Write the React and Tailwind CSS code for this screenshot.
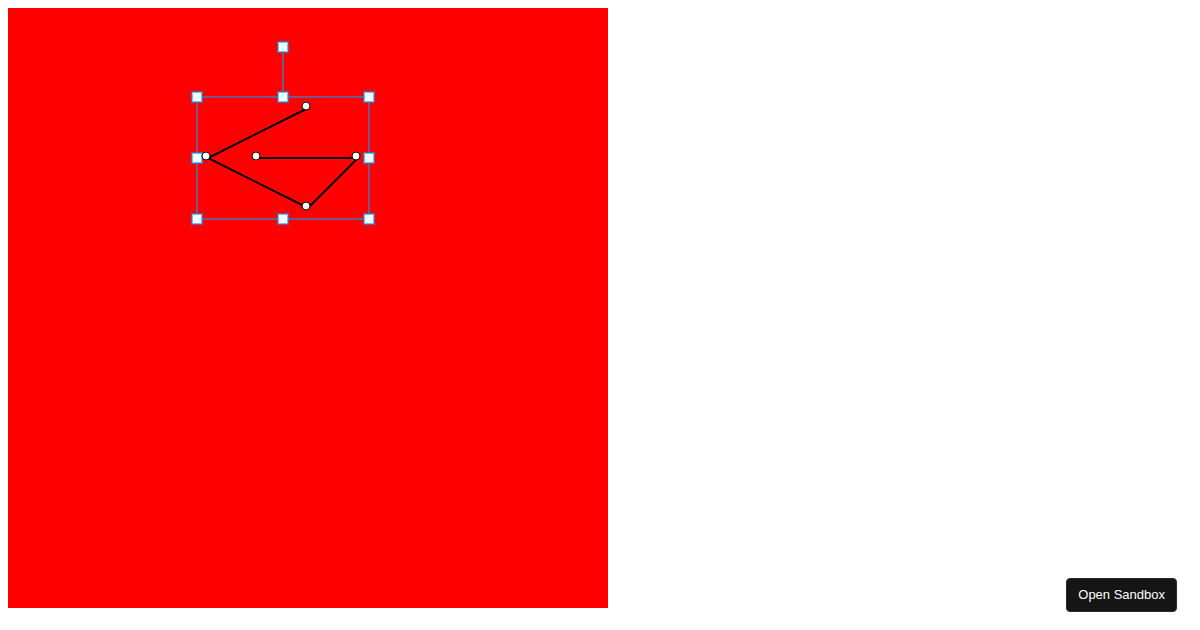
const POINTS = [
  { x: 300, y: 100 },
  { x: 200, y: 150 },
  { x: 300, y: 200 },
  { x: 350, y: 150 },
  { x: 250, y: 150 },
]

const FRAME = { left: 189, top: 89, right: 361, bottom: 211 }
const ROTATE_OFFSET = 50
const HANDLE_SIZE = 10

const TransformFrame = ({ frame }) => {
  const { left, top, right, bottom } = frame
  const midX = (left + right) / 2
  const midY = (top + bottom) / 2
  const handles = [
    [left, top],
    [midX, top],
    [right, top],
    [left, midY],
    [right, midY],
    [left, bottom],
    [midX, bottom],
    [right, bottom],
    [midX, top - ROTATE_OFFSET],
  ]

  return (
    <g stroke="#0099ff" strokeOpacity="0.6" strokeWidth="2">
      <path
        d={`M${left} ${top}H${right}V${bottom}H${left}ZM${midX} ${top}V${
          top - ROTATE_OFFSET
        }`}
        fill="none"
        stroke="#2290e0"
      />
      {handles.map(([x, y]) => (
        <rect
          key={`${x}-${y}`}
          x={x - HANDLE_SIZE / 2}
          y={y - HANDLE_SIZE / 2}
          width={HANDLE_SIZE}
          height={HANDLE_SIZE}
          fill="white"
        />
      ))}
    </g>
  )
}

const App = () => {
  return (
    <main className="p-2">
      <svg
        className="block size-[600px] bg-[#ff0000]"
        viewBox="0 0 600 600"
        role="img"
        aria-label="Polyline editor"
      >
        <polyline
          points={POINTS.map(({ x, y }) => `${x},${y}`).join(" ")}
          fill="none"
          stroke="black"
          strokeWidth="2"
        />
        <TransformFrame frame={FRAME} />
        {POINTS.map(({ x, y }) => (
          // anchors sit slightly up and left of their vertices
          <circle
            key={`${x}-${y}`}
            cx={x - 2}
            cy={y - 2}
            r="4"
            fill="white"
            stroke="black"
          />
        ))}
      </svg>
      <button
        type="button"
        className="fixed right-[23px] bottom-[18px] flex h-[34px] items-center rounded border border-[#2b2630] bg-[#151515] px-[11px] font-['Liberation_Sans',sans-serif] text-[13px] text-white"
      >
        Open Sandbox
      </button>
    </main>
  )
}

export default App
